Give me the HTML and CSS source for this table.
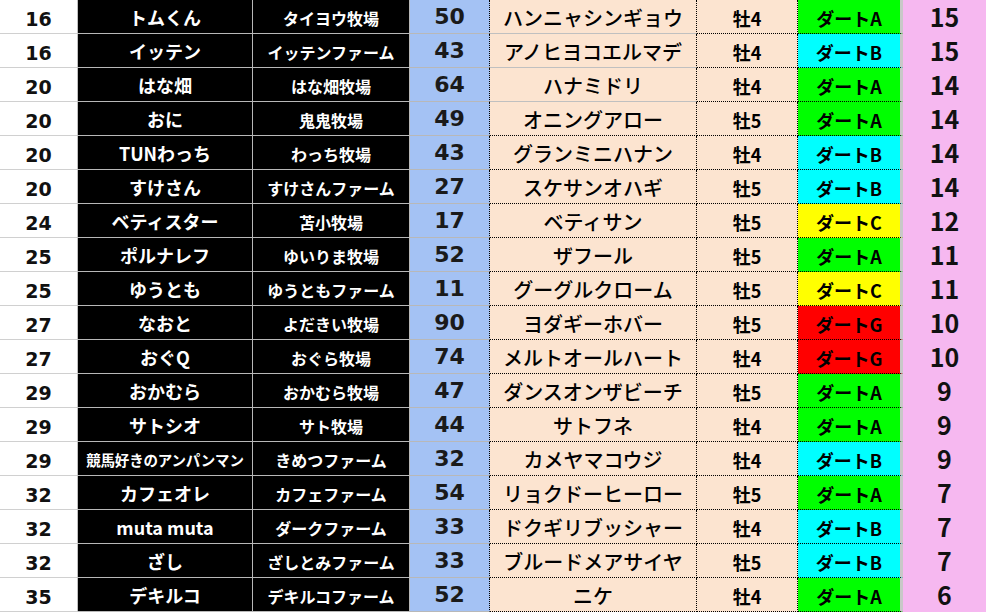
FILE: index.html
```html
<!DOCTYPE html>
<html lang="ja">
<head>
<meta charset="utf-8">
<link rel="stylesheet" href="styles.css">
</head>
<body>
<div class="sheet">
  <div class="c rank">16</div><div class="c owner">トムくん</div><div class="c farm">タイヨウ牧場</div><div class="c num">50</div><div class="c horse g">ハンニャシンギョウ</div><div class="c sex">牡4</div><div class="c cls a">ダートA</div><div class="c pt">15</div>
  <div class="c rank">16</div><div class="c owner">イッテン</div><div class="c farm">イッテンファーム</div><div class="c num">43</div><div class="c horse g">アノヒヨコエルマデ</div><div class="c sex">牡4</div><div class="c cls b">ダートB</div><div class="c pt">15</div>
  <div class="c rank">20</div><div class="c owner">はな畑</div><div class="c farm">はな畑牧場</div><div class="c num">64</div><div class="c horse g">ハナミドリ</div><div class="c sex">牡4</div><div class="c cls a">ダートA</div><div class="c pt">14</div>
  <div class="c rank">20</div><div class="c owner">おに</div><div class="c farm">鬼鬼牧場</div><div class="c num">49</div><div class="c horse">オニングアロー</div><div class="c sex">牡5</div><div class="c cls a">ダートA</div><div class="c pt">14</div>
  <div class="c rank">20</div><div class="c owner">TUNわっち</div><div class="c farm">わっち牧場</div><div class="c num">43</div><div class="c horse">グランミニハナン</div><div class="c sex">牡4</div><div class="c cls b">ダートB</div><div class="c pt">14</div>
  <div class="c rank">20</div><div class="c owner">すけさん</div><div class="c farm">すけさんファーム</div><div class="c num">27</div><div class="c horse">スケサンオハギ</div><div class="c sex">牡5</div><div class="c cls b">ダートB</div><div class="c pt">14</div>
  <div class="c rank">24</div><div class="c owner">ベティスター</div><div class="c farm">苫小牧場</div><div class="c num">17</div><div class="c horse">ベティサン</div><div class="c sex">牡5</div><div class="c cls c3">ダートC</div><div class="c pt">12</div>
  <div class="c rank">25</div><div class="c owner">ポルナレフ</div><div class="c farm">ゆいりま牧場</div><div class="c num">52</div><div class="c horse">ザフール</div><div class="c sex">牡5</div><div class="c cls a">ダートA</div><div class="c pt">11</div>
  <div class="c rank">25</div><div class="c owner">ゆうとも</div><div class="c farm">ゆうともファーム</div><div class="c num">11</div><div class="c horse">グーグルクローム</div><div class="c sex">牡5</div><div class="c cls c3">ダートC</div><div class="c pt">11</div>
  <div class="c rank">27</div><div class="c owner">なおと</div><div class="c farm">よだきい牧場</div><div class="c num">90</div><div class="c horse">ヨダギーホバー</div><div class="c sex">牡5</div><div class="c cls gg">ダートG</div><div class="c pt">10</div>
  <div class="c rank">27</div><div class="c owner">おぐQ</div><div class="c farm">おぐら牧場</div><div class="c num">74</div><div class="c horse">メルトオールハート</div><div class="c sex">牡4</div><div class="c cls gg">ダートG</div><div class="c pt">10</div>
  <div class="c rank">29</div><div class="c owner">おかむら</div><div class="c farm">おかむら牧場</div><div class="c num">47</div><div class="c horse">ダンスオンザビーチ</div><div class="c sex">牡5</div><div class="c cls a">ダートA</div><div class="c pt">9</div>
  <div class="c rank">29</div><div class="c owner">サトシオ</div><div class="c farm">サト牧場</div><div class="c num">44</div><div class="c horse">サトフネ</div><div class="c sex">牡4</div><div class="c cls a">ダートA</div><div class="c pt">9</div>
  <div class="c rank">29</div><div class="c owner small">競馬好きのアンパンマン</div><div class="c farm">きめつファーム</div><div class="c num">32</div><div class="c horse">カメヤマコウジ</div><div class="c sex">牡4</div><div class="c cls b">ダートB</div><div class="c pt">9</div>
  <div class="c rank">32</div><div class="c owner">カフェオレ</div><div class="c farm">カフェファーム</div><div class="c num">54</div><div class="c horse">リョクドーヒーロー</div><div class="c sex">牡5</div><div class="c cls a">ダートA</div><div class="c pt">7</div>
  <div class="c rank">32</div><div class="c owner">muta muta</div><div class="c farm">ダークファーム</div><div class="c num">33</div><div class="c horse">ドクギリブッシャー</div><div class="c sex">牡4</div><div class="c cls b">ダートB</div><div class="c pt">7</div>
  <div class="c rank">32</div><div class="c owner">ざし</div><div class="c farm">ざしとみファーム</div><div class="c num">33</div><div class="c horse">ブルードメアサイヤ</div><div class="c sex">牡5</div><div class="c cls b">ダートB</div><div class="c pt">7</div>
  <div class="c rank">35</div><div class="c owner">デキルコ</div><div class="c farm">デキルコファーム</div><div class="c num">52</div><div class="c horse">ニケ</div><div class="c sex">牡4</div><div class="c cls a">ダートA</div><div class="c pt">6</div>
</div>
</body>
</html>
```
FILE: styles.css
```css
html, body {
  margin: 0;
  padding: 0;
  background: #ffffff;
}

.sheet {
  display: grid;
  grid-template-columns: 78px 175px 157px 80px 207px 101px 105px 83px;
  grid-auto-rows: 34px;
  width: 986px;
  font-family: "Meiryo UI", "Noto Sans CJK JP", sans-serif;
  font-weight: 700;
  color: #000;
}

.c {
  display: flex;
  align-items: center;
  justify-content: center;
  box-sizing: border-box;
  white-space: nowrap;
  padding-top: 3px;
  line-height: 1.2;
}

.rank {
  background: #fff;
  border-right: 1px solid #c0c0c0;
  border-bottom: 1px solid #d0d0d0;
  font-family: "DejaVu Sans", sans-serif;
  font-size: 19px;
  color: #111;
  padding-top: 6px;
}

.owner {
  background: #000;
  color: #fff;
  border-right: 1px solid #b8b8b8;
  border-bottom: 1px solid #b8b8b8;
  font-size: 18px;
}

.owner.small {
  font-size: 14.5px;
  letter-spacing: -0.2px;
}

.farm {
  background: #000;
  color: #fff;
  border-right: 1px solid #b8b8b8;
  border-bottom: 1px solid #b8b8b8;
  font-size: 16px;
  padding-top: 5px;
}

.num {
  background: #a4c2f4;
  border-right: 1px dotted #000;
  border-bottom: 1px solid #b8b8b8;
  font-family: "DejaVu Sans", sans-serif;
  font-size: 22px;
  color: #1a1a1a;
  padding-top: 2px;
}

.horse {
  background: #fce4d0;
  border-right: 1px dotted #000;
  border-bottom: 1px dotted #000;
  font-size: 20px;
  font-weight: 500;
  padding-top: 2px;
}

.horse.g {
  border-bottom: 1px solid #c0c0c0;
}

.sex {
  background: #fce4d0;
  border-right: 1px dotted #000;
  border-bottom: 1px dotted #000;
  font-size: 18px;
  padding-top: 5px;
}

.cls {
  border-right: 3px solid #c8c8c8;
  border-bottom: 1px dotted #000;
  font-size: 18px;
  padding-top: 5px;
}

.cls.a { background: #00ff00; }
.cls.b { background: #00ffff; }
.cls.c3 { background: #ffff00; }
.cls.gg { background: #ff0000; }

.pt {
  background: #f6b8f0;
  font-size: 25px;
  line-height: 1;
  color: #111;
  padding-top: 0;
  padding-bottom: 1px;
}
```
